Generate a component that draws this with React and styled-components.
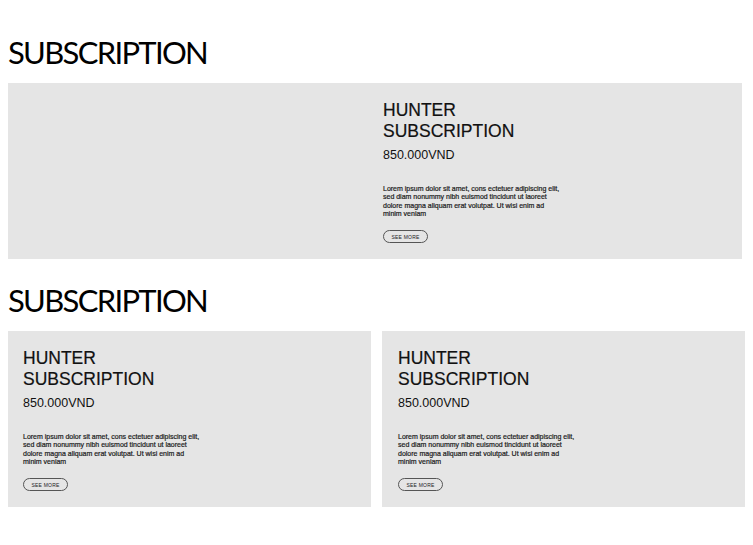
import React from 'react';
import styled, { createGlobalStyle } from 'styled-components';

const GlobalStyle = createGlobalStyle`
  body {
    margin: 0;
    background: #fff;
    font-family: "Liberation Sans", Arial, sans-serif;
    color: #111;
  }
`;

const Page = styled.div`
  padding: 37px 8px 30px;
`;

const Section = styled.section`
  & + & {
    margin-top: 26px;
  }
`;

const Title = styled.h1`
  margin: 0 0 15px;
  font-family: Lato, "Liberation Sans", Arial, sans-serif;
  font-weight: 400;
  font-size: 31px;
  line-height: 31px;
  letter-spacing: -1.7px;
  color: #000;
`;

const Wide = styled.div`
  display: grid;
  grid-template-columns: 1fr 1fr;
  width: 734px;
  background: #e5e5e5;
`;

const Row = styled.div`
  display: grid;
  grid-template-columns: 1fr 1fr;
  column-gap: 11px;
  width: 737px;
`;

const Card = styled.div`
  background: #e5e5e5;
`;

const Content = styled.div`
  display: flex;
  flex-direction: column;
  align-items: flex-start;
  padding: 17px 16px 16px ${p => p.$left || 15}px;
  grid-column: ${p => (p.$second ? 2 : 'auto')};
`;

const Name = styled.h2`
  margin: 0;
  font-size: 17.5px;
  line-height: 21px;
  font-weight: 400;
  color: #111;
  -webkit-text-stroke: 0.2px #111;
`;

const Price = styled.div`
  margin-top: 6px;
  font-size: 12.5px;
  line-height: 15px;
  color: #111;
`;

const Text = styled.p`
  margin: 22px 0 0;
  font-size: 7px;
  line-height: 8.3px;
  color: #1a1a1a;
  -webkit-text-stroke: 0.2px #1a1a1a;
`;

const MoreButton = styled.button`
  margin-top: 12px;
  width: 45px;
  height: 13px;
  padding: 0;
  border: 1px solid #555;
  border-radius: 7px;
  background: transparent;
  font-family: "Liberation Sans", Arial, sans-serif;
  font-size: 5px;
  letter-spacing: 0.2px;
  color: #222;
  cursor: pointer;
`;

const lorem = (
  <>
    Lorem ipsum dolor sit amet, cons ectetuer adipiscing elit,<br />
    sed diam nonummy nibh euismod tincidunt ut laoreet<br />
    dolore magna aliquam erat volutpat. Ut wisi enim ad<br />
    minim veniam
  </>
);

function Offer({ left, second }) {
  return (
    <Content $left={left} $second={second}>
      <Name>
        HUNTER
        <br />
        SUBSCRIPTION
      </Name>
      <Price>850.000VND</Price>
      <Text>{lorem}</Text>
      <MoreButton>SEE MORE</MoreButton>
    </Content>
  );
}

export default function App() {
  return (
    <Page>
      <GlobalStyle />
      <Section>
        <Title>SUBSCRIPTION</Title>
        <Wide>
          <Offer second left={8} />
        </Wide>
      </Section>
      <Section>
        <Title>SUBSCRIPTION</Title>
        <Row>
          <Card>
            <Offer left={15} />
          </Card>
          <Card>
            <Offer left={16} />
          </Card>
        </Row>
      </Section>
    </Page>
  );
}
